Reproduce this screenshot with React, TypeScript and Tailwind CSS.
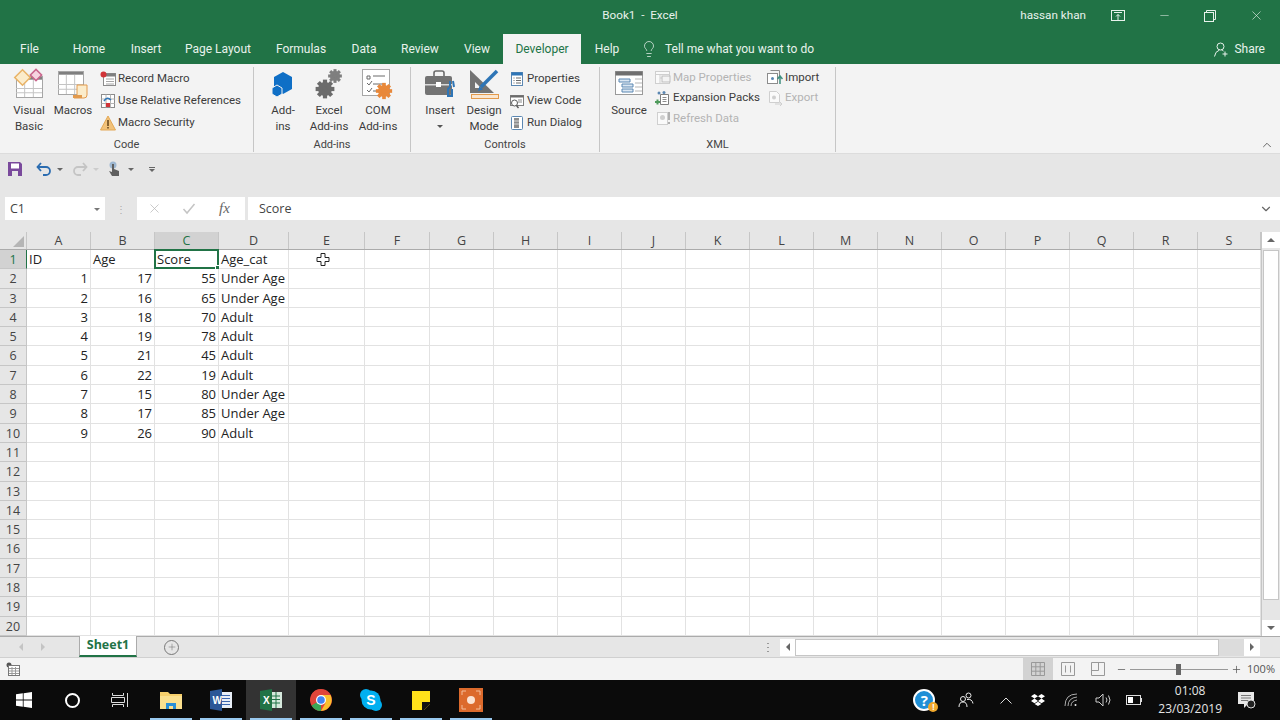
/**
 * Excel 2016 window, Developer tab, small sheet of ages and scores.
 */
import { ReactNode } from 'react';
import { ChevronDown, ChevronUp, Lightbulb, Minus, Plus, X } from 'lucide-react';

const font = 'font-["Open_Sans","Liberation_Sans",sans-serif]';
const chrome = 'font-["Roboto","Liberation_Sans",sans-serif]';

const tabs = [
  { label: 'File', w: 'w-[59px]' },
  { label: 'Home', w: 'w-[60px]' },
  { label: 'Insert', w: 'w-[54px]' },
  { label: 'Page Layout', w: 'w-[90px]' },
  { label: 'Formulas', w: 'w-[76px]' },
  { label: 'Data', w: 'w-[50px]' },
  { label: 'Review', w: 'w-[62px]' },
  { label: 'View', w: 'w-[52px]' },
];

const columns = [
  { name: 'A', cls: 'w-[64px]' },
  { name: 'B', cls: 'w-[64px]' },
  { name: 'C', cls: 'w-[64px]' },
  { name: 'D', cls: 'w-[70px]' },
  { name: 'E', cls: 'w-[76px]' },
  { name: 'F', cls: 'w-[65px]' },
  { name: 'G', cls: 'w-[64px]' },
  { name: 'H', cls: 'w-[64px]' },
  { name: 'I', cls: 'w-[64px]' },
  { name: 'J', cls: 'w-[64px]' },
  { name: 'K', cls: 'w-[64px]' },
  { name: 'L', cls: 'w-[64px]' },
  { name: 'M', cls: 'w-[64px]' },
  { name: 'N', cls: 'w-[64px]' },
  { name: 'O', cls: 'w-[64px]' },
  { name: 'P', cls: 'w-[64px]' },
  { name: 'Q', cls: 'w-[64px]' },
  { name: 'R', cls: 'w-[64px]' },
  { name: 'S', cls: 'w-[63px]' },
];

const rows: (string | number)[][] = [
  ['ID', 'Age', 'Score', 'Age_cat'],
  [1, 17, 55, 'Under Age'],
  [2, 16, 65, 'Under Age'],
  [3, 18, 70, 'Adult'],
  [4, 19, 78, 'Adult'],
  [5, 21, 45, 'Adult'],
  [6, 22, 19, 'Adult'],
  [7, 15, 80, 'Under Age'],
  [8, 17, 85, 'Under Age'],
  [9, 26, 90, 'Adult'],
];

function Svg({ s = 16, w, h, children }: { s?: number; w?: number; h?: number; children: ReactNode }) {
  const vw = w ?? s;
  const vh = h ?? s;
  return (
    <svg width={vw} height={vh} viewBox={`0 0 ${vw} ${vh}`} className="shrink-0">
      {children}
    </svg>
  );
}

function Gear({ cx, cy, r, fill }: { cx: number; cy: number; r: number; fill: string }) {
  const teeth = [0, 45, 90, 135];
  return (
    <g>
      {teeth.map((a) => (
        <rect
          key={a}
          x={cx - r * 0.28}
          y={cy - r * 1.25}
          width={r * 0.56}
          height={r * 2.5}
          fill={fill}
          transform={`rotate(${a} ${cx} ${cy})`}
        />
      ))}
      <circle cx={cx} cy={cy} r={r * 0.65} fill="none" stroke={fill} strokeWidth={r * 0.55} />
    </g>
  );
}

function SheetGlyph({ x, y, w, h }: { x: number; y: number; w: number; h: number }) {
  return (
    <g stroke="#a6a6a6" fill="#fff">
      <rect x={x + 0.5} y={y + 0.5} width={w} height={h} />
      <rect x={x + 0.5} y={y + 0.5} width={w} height={3} fill="#7f7f7f" />
      <path d={`M${x + w / 3} ${y + 4}V${y + h}M${x + (2 * w) / 3} ${y + 4}V${y + h}M${x} ${y + h / 2 + 2}H${x + w}M${x} ${y + (3 * h) / 4 + 1}H${x + w}`} fill="none" stroke="#c4c4c4" />
    </g>
  );
}

const VisualBasicIcon = () => (
  <Svg w={32} h={32}>
    <SheetGlyph x={3} y={8} w={26} h={21} />
    <rect x="4" y="4" width="11" height="11" fill="#fbeccb" stroke="#e9b366" strokeWidth="1.5" transform="rotate(45 9.5 9.5)" />
    <rect x="19" y="3" width="8" height="8" fill="#f6d3e0" stroke="#c9658c" strokeWidth="1.5" transform="rotate(45 23 7)" />
  </Svg>
);

const MacrosIcon = () => (
  <Svg w={32} h={32}>
    <SheetGlyph x={1} y={3} w={25} h={23} />
    <path d="M20 17h10v10a3 3 0 0 1-3 3H17v-2h3z" fill="#fbeccb" stroke="#e39a4c" />
    <rect x="16" y="27" width="9" height="3" fill="#e39a4c" />
  </Svg>
);

const AddInsIcon = () => (
  <Svg w={24} h={28}>
    <path d="M12 2l9 5v12l-9 5-9-5V7z" fill="#0f6fc6" />
    <path d="M6 15l5 3v6l-5 3-5-3v-6z" fill="#0f6fc6" stroke="#f3f3f3" />
  </Svg>
);

const ExcelAddInsIcon = () => (
  <Svg w={30} h={32}>
    <Gear cx={21} cy={8} r={5.5} fill="#7f7f7f" />
    <Gear cx={11} cy={21} r={7.5} fill="#6b6b6b" />
  </Svg>
);

const ComAddInsIcon = () => (
  <Svg w={34} h={32}>
    <rect x="1.5" y="1.5" width="27" height="26" fill="#fff" stroke="#a6a6a6" />
    <path d="M6 8h3v3H6zM12 8h12M6 15l2 2 3-4M12 16h10M6 22l2 2 3-4M12 23h5" fill="none" stroke="#6b6b6b" />
    <Gear cx={23} cy={23} r={6.5} fill="#e8883a" />
  </Svg>
);

const InsertIcon = () => (
  <Svg w={32} h={32}>
    <path d="M10 8V5a2 2 0 0 1 2-2h6a2 2 0 0 1 2 2v3" fill="none" stroke="#6b6b6b" strokeWidth="1.6" />
    <rect x="1" y="8" width="27" height="19" rx="2" fill="#737373" />
    <rect x="1" y="16" width="27" height="1.5" fill="#d9d9d9" />
    <rect x="12" y="14" width="5" height="5" fill="#fff" />
    <path d="M26 13v6l-2 2v7h4v-7M29 13l1 6" stroke="#2e75b6" strokeWidth="2" fill="none" />
  </Svg>
);

const DesignModeIcon = () => (
  <Svg w={32} h={32}>
    <path d="M2 2v23h24z" fill="#737373" />
    <path d="M7 14v6h6z" fill="#f3f3f3" />
    <path d="M13 19L29 3" stroke="#2e75b6" strokeWidth="3.5" />
    <path d="M10 23l1.500-5 3.500 3.500z" fill="#2e75b6" />
    <rect x="3.500" y="26.500" width="27" height="4" fill="#fbe6cf" stroke="#e39a4c" />
  </Svg>
);

const SourceIcon = () => (
  <Svg w={30} h={32}>
    <rect x="1.5" y="3.5" width="27" height="23" fill="#fff" stroke="#9a9a9a" />
    <rect x="1.5" y="3.5" width="27" height="4" fill="#6f6f6f" />
    <path d="M5 11h11v3H5zM8 16h11v3H8zM8 21h11v3H8z" fill="#dbe7f3" stroke="#5b87b2" />
    <path d="M21 11h7M21 15h7M21 19h7M21 23h7" stroke="#b5b5b5" />
  </Svg>
);

const smallIcons: Record<string, ReactNode> = {
  record: (
    <Svg>
      <rect x="3.5" y="2.5" width="12" height="12" fill="#fff" stroke="#8c8c8c" />
      <rect x="3.5" y="2.5" width="12" height="3" fill="#7f7f7f" />
      <path d="M6 8h8M6 10.500h8M6 13h8" stroke="#a6a6a6" />
      <circle cx="3.500" cy="3.500" r="3" fill="#d13438" />
    </Svg>
  ),
  relative: (
    <Svg>
      <rect x="1.500" y="1.500" width="13" height="13" fill="#fff" stroke="#8c8c8c" />
      <path d="M1.500 6h13M1.500 10.500h13M6 1.500v13M10.500 1.500v13" stroke="#b5b5b5" />
      <path d="M4 8q3-5 7-1" fill="none" stroke="#2e75b6" strokeWidth="1.500" />
      <rect x="6" y="10" width="4" height="4" fill="#d13438" />
    </Svg>
  ),
  security: (
    <Svg>
      <path d="M8 1l7.500 14H.5z" fill="#f2c27a" stroke="#e3a857" />
      <path d="M7.200 5h1.600v6H7.200zM7.200 12h1.600v1.600H7.200z" fill="#6b4a1f" />
    </Svg>
  ),
  properties: (
    <Svg>
      <rect x="2.500" y="1.500" width="11" height="13" fill="#fff" stroke="#5b87b2" />
      <rect x="2.500" y="1.500" width="11" height="3" fill="#2e75b6" />
      <path d="M4.500 7h1M7 7h5M4.500 9.500h1M7 9.500h5M4.500 12h1M7 12h5" stroke="#6b6b6b" />
    </Svg>
  ),
  viewCode: (
    <Svg>
      <rect x="1.500" y="2.500" width="13" height="10" fill="#fff" stroke="#7f7f7f" />
      <rect x="1.500" y="2.500" width="13" height="2" fill="#6b6b6b" />
      <path d="M9 7h4M9 9h4" stroke="#8c8c8c" />
      <circle cx="5.500" cy="10" r="3" fill="#fff" stroke="#595959" />
      <path d="M7.500 12.500l2 2.500" stroke="#595959" strokeWidth="1.400" />
    </Svg>
  ),
  runDialog: (
    <Svg>
      <rect x="2.500" y="1.500" width="11" height="13" rx="1" fill="#fff" stroke="#5b87b2" />
      <rect x="5" y="3" width="5" height="10" fill="#8c8c8c" />
      <path d="M5 6h5M5 9h5" stroke="#d9d9d9" />
    </Svg>
  ),
  mapProps: (
    <Svg>
      <rect x=".5" y="2.500" width="14" height="12" fill="#fafafa" stroke="#cfcfcf" />
      <path d="M.5 5.500h14M5 5.500v9M5 9h9" stroke="#cfcfcf" />
      <rect x="7" y="7" width="8" height="6" fill="#f3f3f3" stroke="#bdbdbd" />
    </Svg>
  ),
  expansion: (
    <Svg>
      <path d="M5.500 4.500h8v10h-8z" fill="#fff" stroke="#7f7f7f" />
      <path d="M7.500 7.500h4M7.500 9.500h4M7.500 11.500h4" stroke="#8c8c8c" />
      <circle cx="4" cy="3" r="1.500" fill="#5b87b2" />
      <circle cx="9" cy="2.500" r="1.500" fill="#5b87b2" />
      <path d="M5 12H0M2.500 9.500v5" stroke="#4e9a5b" strokeWidth="2" />
    </Svg>
  ),
  refresh: (
    <Svg>
      <rect x="2.500" y="2.500" width="10" height="12" fill="#fafafa" stroke="#cfcfcf" />
      <circle cx="7.500" cy="7.500" r="2.500" fill="#cfcfcf" />
      <path d="M14 2v8M14 12v2" stroke="#9a9a9a" strokeWidth="1.500" />
    </Svg>
  ),
  importX: (
    <Svg>
      <rect x=".5" y="4.500" width="10" height="10" fill="#fff" stroke="#8c8c8c" />
      <path d="M3.500 1.500h9v6" fill="none" stroke="#8c8c8c" />
      <circle cx="5.500" cy="9.500" r="1.500" fill="#5b87b2" />
      <path d="M13 15V8M10.500 10l2.500-3 2.500 3" fill="none" stroke="#3f8f7f" strokeWidth="1.500" />
    </Svg>
  ),
  exportX: (
    <Svg>
      <path d="M2.500 1.500h7l3 3v8h-10z" fill="#fafafa" stroke="#cfcfcf" />
      <circle cx="7" cy="7.500" r="2" fill="#cfcfcf" />
      <path d="M8 14h7M13 12l2 2-2 2" fill="none" stroke="#cfcfcf" />
    </Svg>
  ),
};

function LargeButton({ icon, label, w, caret }: { icon: ReactNode; label: ReactNode; w: string; caret?: boolean }) {
  return (
    <div className={`${w} flex flex-col items-center`}>
      <div className="flex h-[33px] items-center justify-center">{icon}</div>
      <div className="mt-[2px] text-center text-[11.500px] leading-[16px] text-[#3c3c3c]">{label}</div>
      {caret && <div className="mt-[7px] h-0 w-0 border-x-[3px] border-t-[3px] border-x-transparent border-t-[#555]" />}
    </div>
  );
}

function SmallButton({ icon, label, off }: { icon: ReactNode; label: string; off?: boolean }) {
  return (
    <div className={`flex h-[22px] items-center gap-[2px] text-[11.500px] whitespace-nowrap ${off ? 'text-[#b4b4b4]' : 'text-[#3c3c3c]'}`}>
      {icon}
      <span>{label}</span>
    </div>
  );
}

function XmlButton({ icon, label, off }: { icon: ReactNode; label: string; off?: boolean }) {
  return (
    <div className={`flex h-[20.500px] items-center gap-[2px] text-[11.500px] whitespace-nowrap ${off ? 'text-[#b4b4b4]' : 'text-[#3c3c3c]'}`}>
      {icon}
      <span>{label}</span>
    </div>
  );
}

function Group({ w, label, children }: { w: string; label: string; children: ReactNode }) {
  return (
    <div className={`${w} flex h-[85px] shrink-0 flex-col border-r border-[#c6c6c6]`}>
      <div className="flex h-[71px] items-start">{children}</div>
      <div className="mt-[3px] text-center text-[11px] leading-[14px] text-[#444]">{label}</div>
    </div>
  );
}

function TitleBar() {
  return (
    <div className={`grid h-[32px] grid-cols-[1fr_auto_1fr] items-center text-[11.700px] text-[#e8f2ec] ${chrome}`}>
      <div />
      <div>Book1&nbsp; -&nbsp; Excel</div>
      <div className="flex items-center justify-end pr-px">
        <span className="mr-[9px] whitespace-nowrap">hassan khan</span>
        <div className="flex w-[46px] justify-center">
          <svg width="14" height="12" viewBox="0 0 14 12" fill="none" stroke="#e8f2ec">
            <rect x=".5" y=".5" width="13" height="10" />
            <path d="M3 2.500h8M7 10V4.500M5 6.500l2-2 2 2" />
          </svg>
        </div>
        <div className="flex w-[46px] justify-center">
          <Minus size={13} strokeWidth={1} color="#e8f2ec" />
        </div>
        <div className="flex w-[46px] justify-center">
          <svg width="12" height="12" viewBox="0 0 12 12" fill="none" stroke="#e8f2ec">
            <rect x=".5" y="2.500" width="9" height="9" />
            <path d="M2.500 2.500v-2h9v9h-2" />
          </svg>
        </div>
        <div className="flex w-[46px] justify-center">
          <X size={15} strokeWidth={1} color="#e8f2ec" />
        </div>
      </div>
    </div>
  );
}

function TabRow() {
  return (
    <div className={`flex h-[32px] items-end text-[12px] text-[#e8f2ec] ${chrome}`}>
      {tabs.map((t) => (
        <div key={t.label} className={`${t.w} flex h-[30px] items-center justify-center`}>
          {t.label}
        </div>
      ))}
      <div className="flex h-[30px] w-[78px] items-center justify-center bg-[#f3f3f3] text-[#217346]">Developer</div>
      <div className="flex h-[30px] w-[52px] items-center justify-center">Help</div>
      <div className="ml-[7px] flex h-[30px] items-center gap-[7px]">
        <Lightbulb size={18} strokeWidth={1} color="#e8f2ec" />
        <span>Tell me what you want to do</span>
      </div>
      <div className="ml-auto mr-[15px] flex h-[30px] items-center gap-[5px]">
        <svg width="15" height="15" viewBox="0 0 15 15" fill="none" stroke="#e8f2ec">
          <circle cx="6.500" cy="4.500" r="3.500" />
          <path d="M.5 14.500q.5-5 5-6.500M7.500 8q1.500.5 2 1M11 9.500v5M8.500 12h5" />
        </svg>
        <span>Share</span>
      </div>
    </div>
  );
}

function Ribbon() {
  return (
    <div className={`relative flex h-[89px] items-start bg-[#f3f3f3] pt-[3px] ${chrome}`}>
      <Group w="w-[254px]" label="Code">
        <div className="ml-[6px]" />
        <LargeButton w="w-[46px]" icon={<VisualBasicIcon />} label={<>Visual<br />Basic</>} />
        <LargeButton w="w-[42px]" icon={<MacrosIcon />} label="Macros" />
        <div className="ml-[6px] mt-px flex flex-col">
          <SmallButton icon={smallIcons.record} label="Record Macro" />
          <SmallButton icon={smallIcons.relative} label="Use Relative References" />
          <SmallButton icon={smallIcons.security} label="Macro Security" />
        </div>
      </Group>
      <Group w="w-[157px]" label="Add-ins">
        <div className="ml-[8px]" />
        <LargeButton w="w-[42px]" icon={<AddInsIcon />} label={<>Add-<br />ins</>} />
        <LargeButton w="w-[50px]" icon={<ExcelAddInsIcon />} label={<>Excel<br />Add-ins</>} />
        <LargeButton w="w-[48px]" icon={<ComAddInsIcon />} label={<>COM<br />Add-ins</>} />
      </Group>
      <Group w="w-[189px]" label="Controls">
        <div className="ml-[8px]" />
        <LargeButton w="w-[42px]" icon={<InsertIcon />} label="Insert" caret />
        <LargeButton w="w-[46px]" icon={<DesignModeIcon />} label={<>Design<br />Mode</>} />
        <div className="ml-[2px] mt-px flex flex-col">
          <SmallButton icon={smallIcons.properties} label="Properties" />
          <SmallButton icon={smallIcons.viewCode} label="View Code" />
          <SmallButton icon={smallIcons.runDialog} label="Run Dialog" />
        </div>
      </Group>
      <Group w="w-[236px]" label="XML">
        <div className="ml-[8px]" />
        <LargeButton w="w-[42px]" icon={<SourceIcon />} label="Source" />
        <div className="ml-[5px] flex w-[112px] flex-col">
          <XmlButton icon={smallIcons.mapProps} label="Map Properties" off />
          <XmlButton icon={smallIcons.expansion} label="Expansion Packs" />
          <XmlButton icon={smallIcons.refresh} label="Refresh Data" off />
        </div>
        <div className="flex flex-col">
          <XmlButton icon={smallIcons.importX} label="Import" />
          <XmlButton icon={smallIcons.exportX} label="Export" off />
        </div>
      </Group>
      <ChevronUp size={14} strokeWidth={1.5} color="#555" className="absolute right-[6px] bottom-[1px]" />
    </div>
  );
}

function QuickAccess() {
  const caret = 'h-0 w-0 border-x-[3px] border-t-[3px] border-x-transparent border-t-[#666]';
  return (
    <div className="flex h-[33px] items-center border-t border-[#dcdcdc] bg-[#e6e6e6] pb-[2px]">
      <div className="ml-[8px]">
        <svg width="14" height="14" viewBox="0 0 14 14" className="block">
          <path d="M0 0h12l2 2v12H0z" fill="#7a4a9c" />
          <rect x="3" y="1.500" width="8" height="5" fill="#fff" />
          <rect x="4" y="9" width="6" height="5" fill="#e6e6e6" />
        </svg>
      </div>
      <svg width="16" height="14" viewBox="0 0 16 14" fill="none" stroke="#2b6cb0" strokeWidth="1.800" className="ml-[14px]">
        <path d="M2 5h8a4 4 0 0 1 0 8H7M5 1L1.500 5 5 9" />
      </svg>
      <div className={`${caret} ml-[5px]`} />
      <svg width="16" height="14" viewBox="0 0 16 14" fill="none" stroke="#c4c4c4" strokeWidth="1.800" className="ml-[9px]">
        <path d="M14 5H6a4 4 0 0 0 0 8h3M11 1l3.500 4L11 9" />
      </svg>
      <div className="ml-[5px] h-0 w-0 border-x-[3px] border-t-[3px] border-x-transparent border-t-[#ccc]" />
      <svg width="14" height="16" viewBox="0 0 14 16" className="ml-[8px]">
        <circle cx="6" cy="4" r="3.500" fill="#9db7d1" />
        <path d="M5 3h2v5l5 2v5H5l-3-5 3 1z" fill="#5f5f5f" />
      </svg>
      <div className={`${caret} ml-[7px]`} />
      <div className="ml-[15px] flex flex-col items-center gap-[1px]">
        <div className="h-px w-[6px] bg-[#666]" />
        <div className={caret} />
      </div>
    </div>
  );
}

function FormulaBar() {
  return (
    <div className="bg-[#e6e6e6] pt-[11px] pb-[12px]">
      <div className="flex h-[23px] items-stretch text-[12.500px] text-[#444]">
        <div className="ml-[5px] flex w-[100px] items-center justify-between bg-white pt-px pr-[5px] pl-[5px]">
          <span>C1</span>
          <div className="h-0 w-0 border-x-[3px] border-t-[3px] border-x-transparent border-t-[#777]" />
        </div>
        <div className="flex w-[32px] items-center justify-center text-[10px] leading-none text-[#aaa]">⋮</div>
        <div className="flex w-[108px] items-center bg-white text-[#b8b8b8]">
          <X size={15} strokeWidth={1.2} className="ml-[10px]" />
          <svg width="14" height="12" viewBox="0 0 14 12" fill="none" stroke="#c4c4c4" strokeWidth="1.500" className="ml-[20px]">
            <path d="M1.500 6l3.500 4 7.500-9" />
          </svg>
          <span className="ml-[23px] font-['Liberation_Serif',serif] text-[15px] text-[#666] italic">fx</span>
        </div>
        <div className="ml-[3px] flex flex-1 items-center justify-between bg-white pt-px pr-[7px] pl-[11px]">
          <span>Score</span>
          <ChevronDown size={14} strokeWidth={2} color="#666" />
        </div>
      </div>
    </div>
  );
}

function Cell({ value }: { value: string | number | undefined }) {
  const numeric = typeof value === 'number';
  return (
    <div className={`h-full truncate px-[2px] ${numeric ? 'text-right' : 'text-left'}`}>{value}</div>
  );
}

function Sheet() {
  const rowNums = Array.from({ length: 20 }, (_, i) => i);
  return (
    <div className="flex h-[404px] bg-white">
      <div className="w-[1261px] shrink-0">
        <div className="flex h-[18px] border-b border-[#ababab] bg-[#e6e6e6] text-[12.500px] leading-[17px] text-[#444]">
          <div className="relative w-[27px] shrink-0 border-r border-[#c6c6c6]">
            <div className="absolute right-[2px] bottom-[2px] h-0 w-0 border-b-[11px] border-l-[11px] border-b-[#b5b5b5] border-l-transparent" />
          </div>
          {columns.map((c) => (
            <div
              key={c.name}
              className={`${c.cls} shrink-0 border-r border-[#c6c6c6] text-center ${c.name === 'C' ? 'bg-[#d2d2d2] text-[#217346]' : ''}`}
            >
              {c.name}
            </div>
          ))}
        </div>
        {rowNums.map((i) => (
          <div key={i} className="flex h-[19.300px] text-[13px] leading-[19px] text-[#222]">
            <div
              className={`w-[27px] shrink-0 border-r border-b border-[#c6c6c6] text-center text-[12.500px] ${i === 0 ? 'border-r-[#217346] bg-[#d2d2d2] text-[#217346]' : 'bg-[#e6e6e6] text-[#444]'}`}
            >
              {i + 1}
            </div>
            {columns.map((c, ci) => (
              <div key={c.name} className={`${c.cls} relative shrink-0 border-r border-b border-[#e2e2e2]`}>
                <Cell value={rows[i]?.[ci]} />
                {i === 0 && ci === 2 && (
                  <div className="absolute -top-px -right-px -bottom-px -left-px border-2 border-[#217346]">
                    <div className="absolute -right-[3px] -bottom-[3px] h-[5px] w-[5px] border border-white bg-[#217346]" />
                  </div>
                )}
                {i === 0 && ci === 4 && (
                  <svg width="14" height="14" viewBox="0 0 14 14" className="absolute top-[3px] left-[27px]">
                    <path d="M5 .5h4v4h4v4H9v4H5v-4H1v-4h4z" fill="#fff" stroke="#222" />
                  </svg>
                )}
              </div>
            ))}
          </div>
        ))}
      </div>
      <div className="flex w-[19px] flex-col border-l border-[#c6c6c6] bg-[#e6e6e6]">
        <div className="flex h-[16px] items-center justify-center bg-white">
          <div className="h-0 w-0 border-x-[4px] border-b-[4px] border-x-transparent border-b-[#666]" />
        </div>
        <div className="mx-px mt-[2px] h-[350px] border border-[#c6c6c6] bg-white" />
        <div className="mt-auto flex h-[16px] items-center justify-center bg-white">
          <div className="h-0 w-0 border-x-[4px] border-t-[4px] border-x-transparent border-t-[#666]" />
        </div>
      </div>
    </div>
  );
}

function SheetTabs() {
  return (
    <div className="flex h-[21px] items-stretch border-t border-[#ababab] bg-[#e6e6e6]">
      <div className="flex w-[79px] items-center gap-[18px] pl-[19px]">
        <div className="h-0 w-0 border-y-[4px] border-r-[4px] border-y-transparent border-r-[#c4c4c4]" />
        <div className="h-0 w-0 border-y-[4px] border-l-[4px] border-y-transparent border-l-[#c4c4c4]" />
      </div>
      <div className="-mt-px flex w-[58px] items-center justify-center border-x border-b-2 border-x-[#ababab] border-b-[#217346] bg-white text-[12.500px] font-bold text-[#217346]">
        Sheet1
      </div>
      <div className="ml-[27px] flex items-center">
        <div className="flex h-[15px] w-[15px] items-center justify-center rounded-full border border-[#777]">
          <Plus size={10} strokeWidth={1.2} color="#666" />
        </div>
      </div>
      <div className="ml-auto flex items-center">
        <div className="mr-[11px] flex h-[9px] flex-col justify-between">
          <div className="h-px w-[2px] bg-[#999]" />
          <div className="h-px w-[2px] bg-[#999]" />
          <div className="h-px w-[2px] bg-[#999]" />
        </div>
        <div className="flex h-[17px] w-[15px] items-center justify-center bg-white">
          <div className="h-0 w-0 border-y-[4px] border-r-[4px] border-y-transparent border-r-[#666]" />
        </div>
        <div className="h-[17px] w-[424px] border border-[#c6c6c6] bg-white" />
        <div className="h-[17px] w-[25px] bg-[#dcdcdc]" />
        <div className="flex h-[17px] w-[16px] items-center justify-center bg-white">
          <div className="h-0 w-0 border-y-[4px] border-l-[4px] border-y-transparent border-l-[#666]" />
        </div>
        <div className="w-[20px]" />
      </div>
    </div>
  );
}

function StatusBar() {
  return (
    <div className="flex h-[23px] items-stretch border-t border-[#d0d0d0] bg-[#f3f3f3] text-[11px] text-[#555]">
      <div className="flex items-center pl-[6px]">
        <svg width="14" height="14" viewBox="0 0 14 14">
          <circle cx="3" cy="3" r="2.500" fill="#555" />
          <rect x="2.500" y="3.500" width="11" height="10" fill="#fff" stroke="#777" />
          <path d="M3 6.500h10M3 9h10M3 11.500h10M6 5v8M9.500 5v8" stroke="#999" />
        </svg>
      </div>
      <div className="ml-auto flex items-stretch">
        <div className="flex w-[30px] items-center justify-center bg-[#d2d2d2]">
          <svg width="14" height="14" viewBox="0 0 14 14" fill="none" stroke="#999">
            <path d="M.5.500h13v13H.5zM.5 4.800h13M.5 9.200h13M4.800.500v13M9.200.500v13" />
          </svg>
        </div>
        <div className="flex w-[30px] items-center justify-center">
          <svg width="14" height="14" viewBox="0 0 14 14" fill="none" stroke="#999">
            <path d="M.5.500h13v13H.5zM4.500 3.500v7M9.500 3.500v7" />
          </svg>
        </div>
        <div className="flex w-[30px] items-center justify-center">
          <svg width="14" height="14" viewBox="0 0 14 14" fill="none" stroke="#999">
            <path d="M.5.500h13v13H.5zM.5 8.500h7v-8" />
          </svg>
        </div>
        <div className="ml-[3px] flex items-center">
          <Minus size={11} strokeWidth={1.6} color="#555" />
          <div className="relative mx-[3px] h-px w-[98px] bg-[#999]">
            <div className="absolute -top-[5px] left-[46px] h-[11px] w-[5px] bg-[#666]" />
          </div>
          <Plus size={11} strokeWidth={1.6} color="#555" />
        </div>
        <div className="ml-[5px] mr-[5px] flex items-center">100%</div>
      </div>
    </div>
  );
}

function TaskIcon({ children, w = 'w-[50px]', active, running }: { children: ReactNode; w?: string; active?: boolean; running?: boolean }) {
  return (
    <div className={`relative flex h-[40px] ${w} items-center justify-center ${active ? 'bg-[#333]' : ''}`}>
      {children}
      {running && <div className="absolute right-[4px] bottom-0 left-[4px] h-[2px] bg-[#99c9ef]" />}
    </div>
  );
}

function Taskbar() {
  return (
    <div className="flex h-[40px] items-center bg-[#0b0b0b] text-white">
      <TaskIcon w="w-[48px]">
        <svg width="16" height="16" viewBox="0 0 16 16" fill="#fff">
          <path d="M0 2.300l6.800-1v6.200H0zM7.600 1.200L16 0v7.500H7.600zM0 8.400h6.800v6.300L0 13.700zM7.600 8.400H16V16l-8.400-1.200z" />
        </svg>
      </TaskIcon>
      <TaskIcon w="w-[48px]">
        <div className="h-[15px] w-[15px] rounded-full border-2 border-white" />
      </TaskIcon>
      <TaskIcon w="w-[48px]">
        <svg width="18" height="16" viewBox="0 0 18 16" fill="none" stroke="#ddd">
          <path d="M1.500 1v2.500h11V1M1.500 15v-2.500h11V15M.5 5.500h13v5H.5zM16.500 1v14" />
        </svg>
      </TaskIcon>
      <div className="w-[2px]" />
      <TaskIcon running>
        <svg width="22" height="20" viewBox="0 0 22 20">
          <path d="M0 2h8l2 2h12v15H0z" fill="#f6cf6b" />
          <rect x="0" y="6" width="22" height="13" fill="#fbe08e" />
          <path d="M6 19v-6h10v6h-3v-3H9v3z" fill="#2a8fd6" />
        </svg>
      </TaskIcon>
      <TaskIcon running>
        <svg width="22" height="22" viewBox="0 0 22 22">
          <rect x="9" y="3" width="13" height="16" fill="#e8eef7" />
          <path d="M12 6.500h8M12 9.500h8M12 12.500h8M12 15.500h8" stroke="#3b66b0" />
          <path d="M0 2l12-2v22L0 20z" fill="#2b5797" />
          <text x="2.500" y="15" fontSize="10" fontWeight="700" fill="#fff" fontFamily="Liberation Sans, sans-serif">W</text>
        </svg>
      </TaskIcon>
      <TaskIcon active running>
        <svg width="22" height="22" viewBox="0 0 22 22">
          <rect x="10" y="3" width="12" height="16" fill="#d6e9dd" />
          <path d="M12 7h8M12 10.500h8M12 14h8M16 3v16" stroke="#217346" />
          <path d="M0 2l12-2v22L0 20z" fill="#217346" />
          <text x="3" y="15" fontSize="10" fontWeight="700" fill="#fff" fontFamily="Liberation Sans, sans-serif">X</text>
        </svg>
      </TaskIcon>
      <TaskIcon running>
        <svg width="22" height="22" viewBox="0 0 22 22">
          <circle cx="11" cy="11" r="11" fill="#e0453a" />
          <path d="M11 11L1.500 16.500A11 11 0 0 0 11 22z" fill="#3aa757" />
          <path d="M11 6h9.500A11 11 0 0 1 11 22l4.500-8z" fill="#fbc02d" />
          <path d="M1.500 5.500L6.500 14A5 5 0 0 1 11 6h9.500A11 11 0 0 0 1.500 5.500z" fill="#e0453a" />
          <circle cx="11" cy="11" r="5" fill="#fff" />
          <circle cx="11" cy="11" r="3.800" fill="#4285f4" />
        </svg>
      </TaskIcon>
      <TaskIcon running>
        <svg width="22" height="22" viewBox="0 0 22 22">
          <circle cx="6" cy="6" r="6" fill="#00aff0" />
          <circle cx="16" cy="16" r="6" fill="#00aff0" />
          <circle cx="11" cy="11" r="9.500" fill="#00aff0" />
          <text x="11" y="16" textAnchor="middle" fontSize="14" fontWeight="700" fill="#fff" fontFamily="Liberation Sans, sans-serif">S</text>
        </svg>
      </TaskIcon>
      <TaskIcon running>
        <svg width="18" height="19" viewBox="0 0 18 19">
          <path d="M0 0h18v13l-6 6H0z" fill="#ffe11a" />
          <path d="M18 11v2l-6 6h-2v-8z" fill="#111" />
        </svg>
      </TaskIcon>
      <TaskIcon running>
        <svg width="24" height="24" viewBox="0 0 24 24" fill="none">
          <rect width="24" height="24" fill="#dc6a2c" />
          <circle cx="12" cy="12" r="4" fill="#fbe3d3" />
          <path d="M3 7V3h4M17 3h4v4M21 17v4h-4M7 21H3v-4" stroke="#f3bd9b" />
        </svg>
      </TaskIcon>

      <div className="ml-auto flex items-center">
        <div className="relative mr-[23px] flex h-[22px] w-[22px] items-center justify-center rounded-full border-2 border-white bg-[#1f8fd6] text-[15px] font-bold text-white">
          ?
          <div className="absolute -right-[5px] -bottom-[3px] flex h-[10px] w-[10px] items-center justify-center rounded-full bg-[#f2a92c] text-[8px] leading-none">!</div>
        </div>
        <svg width="16" height="16" viewBox="0 0 16 16" fill="none" stroke="#eee" className="mr-[26px]">
          <circle cx="10.500" cy="3.500" r="2.500" />
          <circle cx="5" cy="7" r="2.500" />
          <path d="M1 15q0-5 4-5t4 5M9 7.500q5-1 6 4" />
        </svg>
        <svg width="12" height="7" viewBox="0 0 12 7" fill="none" stroke="#ddd" className="mr-[19px]">
          <path d="M.5 6.500L6 1l5.500 5.500" />
        </svg>
        <svg width="14" height="12" viewBox="0 0 14 12" fill="#fff" className="mr-[19px]">
          <path d="M3.500 0L7 2.300 3.500 4.600 0 2.300zM10.500 0L14 2.300l-3.500 2.300L7 2.300zM3.500 4.600L7 6.900 3.500 9.200 0 6.900zM10.500 4.600L14 6.900l-3.500 2.300L7 6.900zM3.600 10L7 7.800l3.400 2.200L7 12z" />
        </svg>
        <svg width="14" height="14" viewBox="0 0 14 14" fill="none" stroke="#aaa" className="mr-[17px]">
          <path d="M1 13Q1 1 13 1M4 13q0-8 9-9M7 13q0-5 6-6" />
          <circle cx="11.500" cy="12" r="1" fill="#eee" stroke="none" />
        </svg>
        <svg width="16" height="14" viewBox="0 0 16 14" fill="none" stroke="#ccc" className="mr-[15px]">
          <path d="M1 5h3l4-4v12l-4-4H1zM11 4.500q2 2.500 0 5M13.500 2.500q3 4.500 0 9" />
        </svg>
        <svg width="16" height="10" viewBox="0 0 16 10" className="mr-[16px]">
          <rect x=".5" y=".5" width="14" height="9" fill="none" stroke="#ddd" />
          <rect x="2" y="2" width="5" height="6" fill="#fff" />
          <rect x="15" y="3" width="1" height="4" fill="#ddd" />
        </svg>
        <div className="mr-[16px] text-center text-[12px] leading-[18px] text-[#e6e6e6]">
          <div>01:08</div>
          <div>23/03/2019</div>
        </div>
        <svg width="18" height="17" viewBox="0 0 18 17" className="mr-[24px]">
          <path d="M0 0h16v12h-6l-4 4v-4H0z" fill="#e8e8e8" />
          <path d="M3 3.500h10M3 6h10M3 8.500h7" stroke="#777" />
          <circle cx="13" cy="12" r="4" fill="#222" stroke="#ddd" />
        </svg>
      </div>
    </div>
  );
}

export default function App() {
  return (
    <div className={`flex h-[720px] w-[1280px] flex-col overflow-hidden ${font}`}>
      <div className="bg-[#217346]">
        <TitleBar />
        <TabRow />
      </div>
      <Ribbon />
      <QuickAccess />
      <FormulaBar />
      <Sheet />
      <SheetTabs />
      <StatusBar />
      <Taskbar />
    </div>
  );
}
